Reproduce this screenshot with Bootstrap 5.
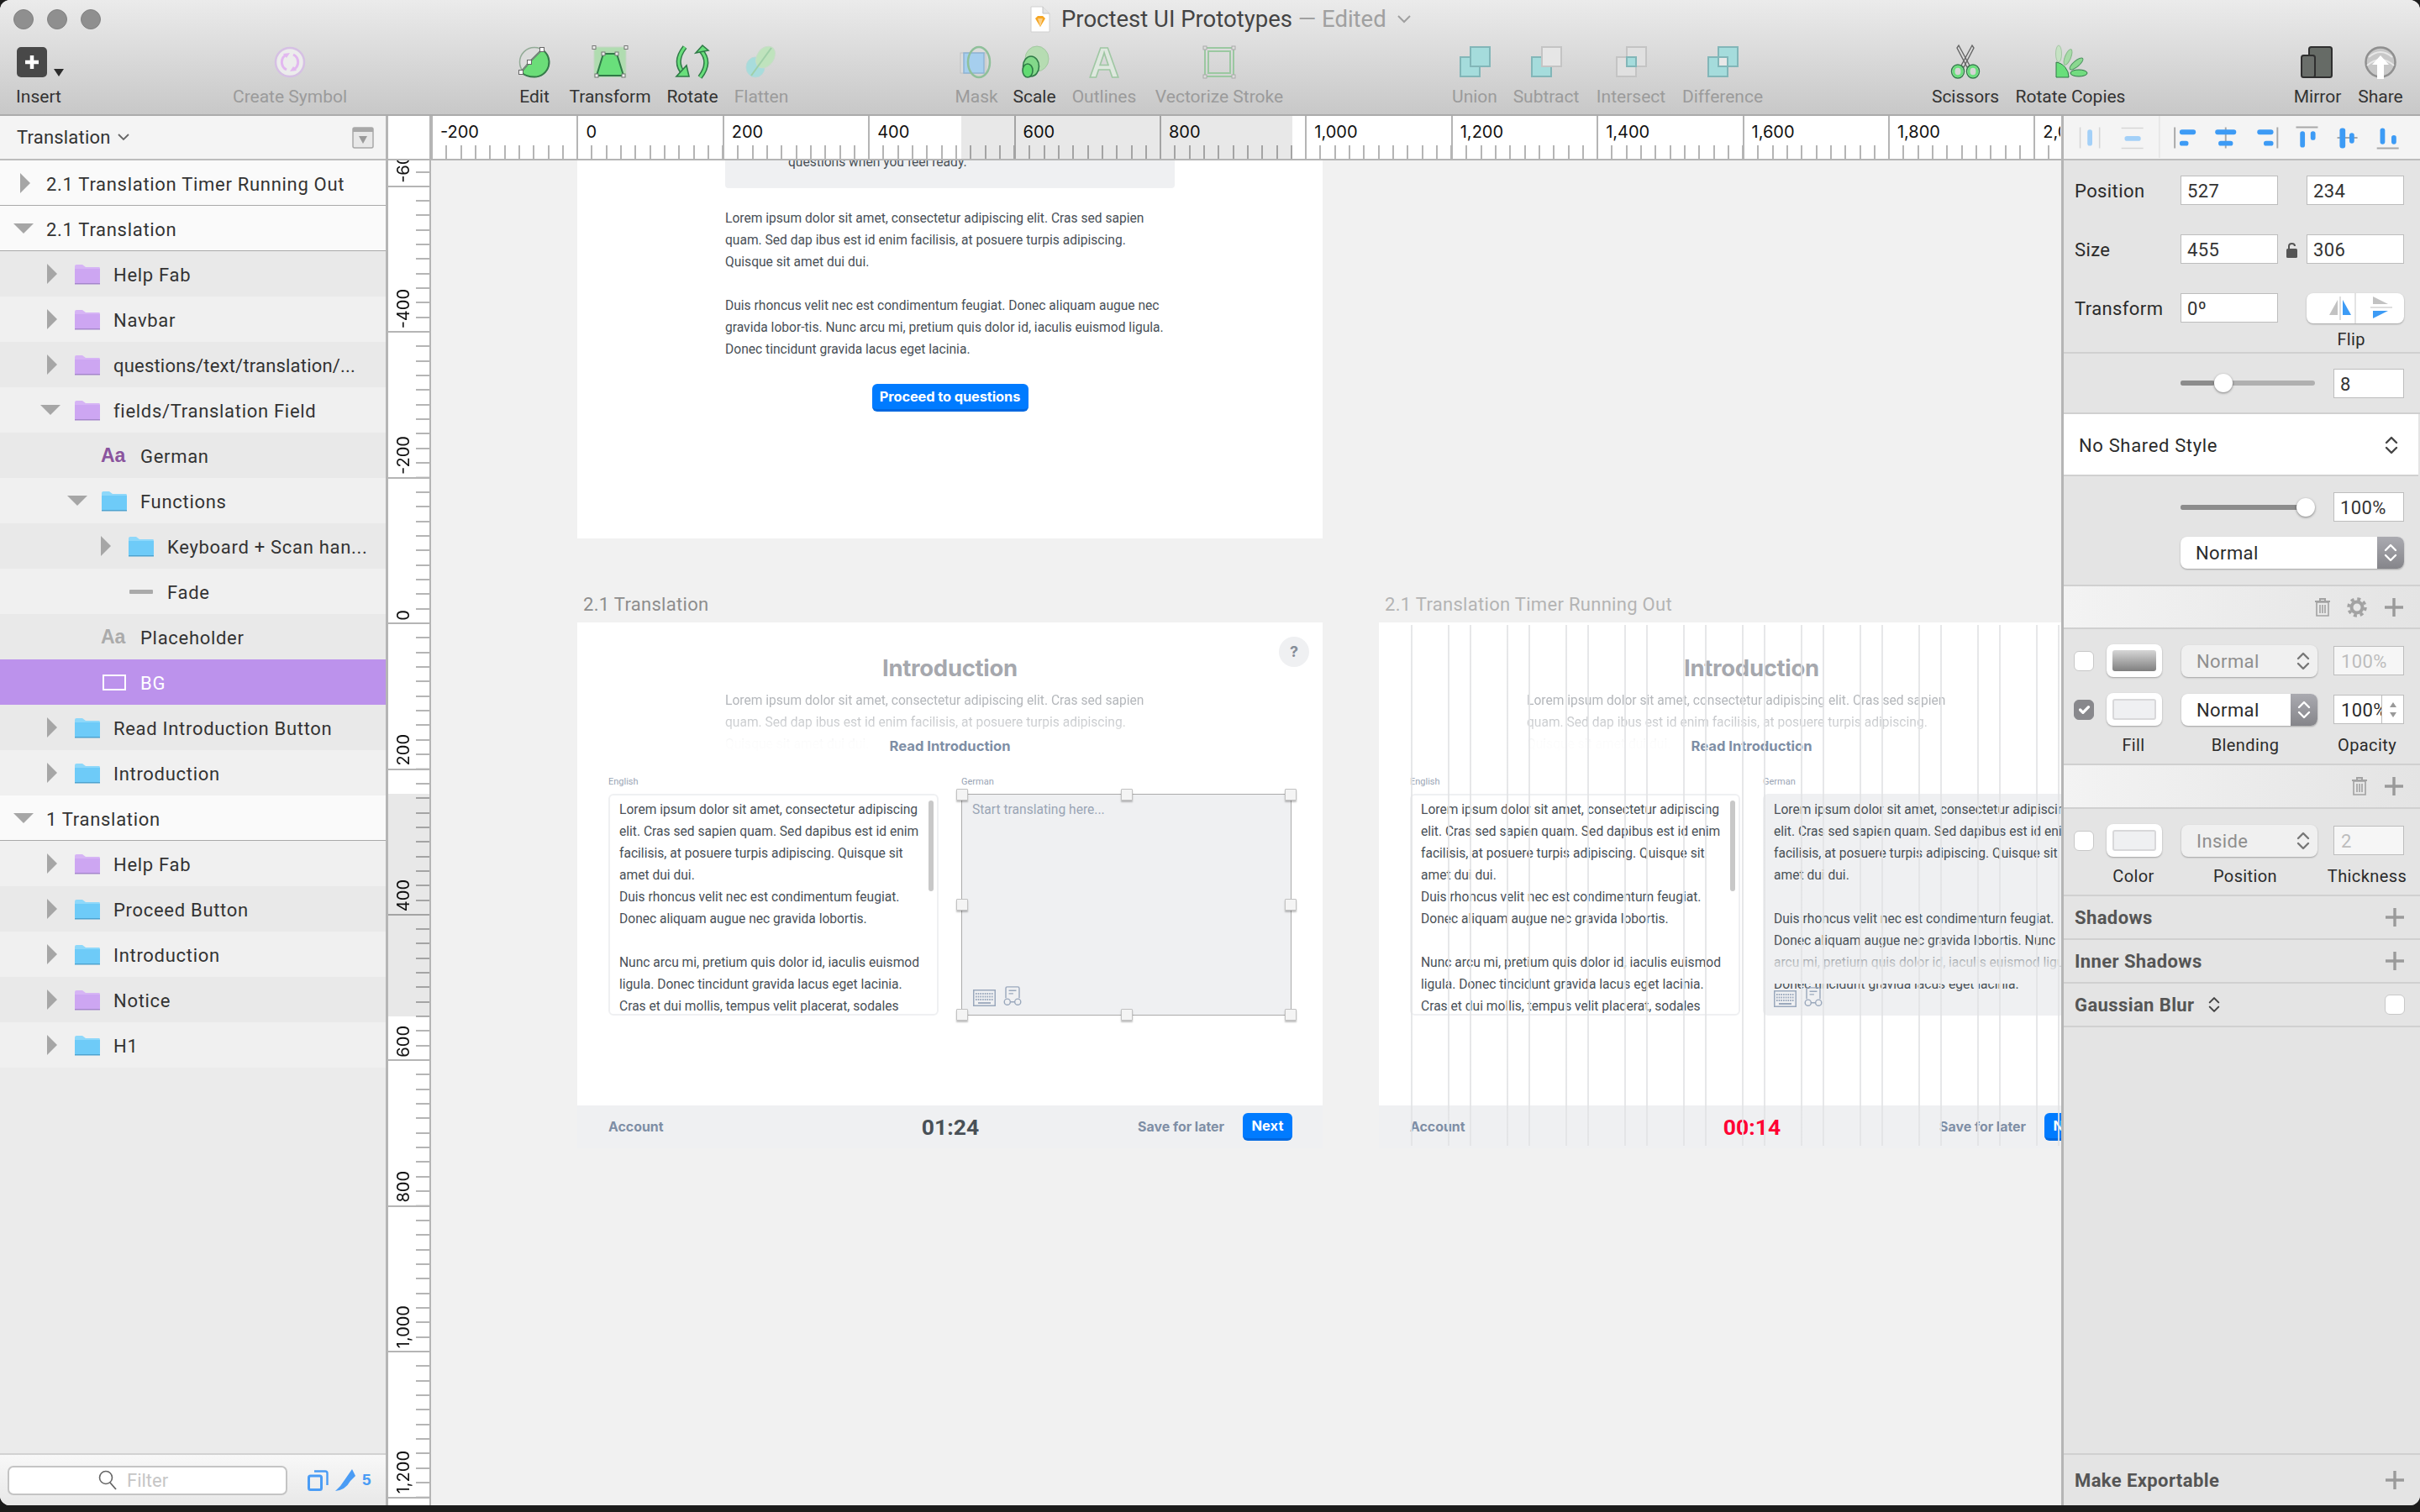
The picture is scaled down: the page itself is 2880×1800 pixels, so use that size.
<!DOCTYPE html>
<html lang="en">
<head>
<meta charset="UTF-8">
<title>Proctest UI Prototypes</title>
<link href="https://cdn.jsdelivr.net/npm/bootstrap@5.3.0/dist/css/bootstrap.min.css" rel="stylesheet">
<style>
html, body { margin: 0; height: 1800px; background: #1c1c1c; overflow: hidden; }
body { font-family: Roboto, "Liberation Sans", sans-serif; color: #333; }
.win { width: 2880px; height: 1792px; border-radius: 12px; overflow: hidden; background: #f1f1f1; }

/* toolbar */
.topbar { height: 138px; flex: none; background: linear-gradient(#ebebeb, #c8c8c8); border-bottom: 2px solid #ababab; }
.titlebar { height: 46px; padding-left: 16px; gap: 16px; }
.light { width: 24px; height: 24px; border-radius: 50%; background: #8f8f8f; border: 1px solid #808080; }
.doc-title { margin-left: 1090px; gap: 13px; font-size: 27.5px; color: #444; white-space: nowrap; }
.doc-title span { color: #a0a0a0; }
.tools { height: 90px; padding-top: 8px; padding-left: 10px; }
.tool { flex: none; font-size: 21px; line-height: 26px; color: #333; white-space: nowrap; }
.tool svg { height: 40px; width: 48px; margin-bottom: 8px; display: block; overflow: visible; }
.tool.off { color: #9b9b9b; }
.t-insert { width: 72px; }
.t-symbol { width: 160px; margin-left: 183px; }
.t-edit { width: 60px; margin-left: 181px; }
.t-transform { width: 110px; margin-left: 5px; }
.t-rotate { width: 70px; margin-left: 8px; }
.t-flatten { width: 80px; margin-left: 7px; }
.t-mask { width: 70px; margin-left: 181px; }
.t-scale { width: 60px; margin-left: 4px; }
.t-outlines { width: 90px; margin-left: 8px; }
.t-vector { width: 170px; margin-left: 7px; }
.t-union { width: 70px; margin-left: 184px; }
.t-subtract { width: 90px; margin-left: 5px; }
.t-intersect { width: 100px; margin-left: 6px; }
.t-difference { width: 100px; margin-left: 9px; }
.t-scissors { width: 100px; margin-left: 189px; }
.t-copies { width: 140px; margin-left: 5px; }
.t-mirror { width: 70px; margin-left: 189px; }
.t-share { width: 60px; margin-left: 10px; }

/* layers */
.layers { width: 459px; flex: none; background: #ebebeb; }
.page-head { height: 53px; flex: none; background: #f4f4f4; border-bottom: 2px solid #bcbcbc; padding: 0 14px 0 20px; font-size: 22px; letter-spacing: .2px; }
.tree-row { height: 54px; flex: none; font-size: 22px; letter-spacing: .7px; color: #333; white-space: nowrap; padding-top: 3px; }
.tree-row.even { background: #f0f0f0; }
.tree-row.odd { background: #e9e9e9; }
.tree-row.artboard { background: #fafafa; border-bottom: 1.5px solid #a9a9a9; }
.tree-row.chosen { background: #bc92ec; color: #fff; }
.tree-row .tight { letter-spacing: .2px; }
.lvl-0 { padding-left: 14px; }
.lvl-1 { padding-left: 46px; }
.lvl-2 { padding-left: 78px; }
.lvl-3 { padding-left: 110px; }
.arrow-slot { width: 32px; flex: none; display: flex; justify-content: center; margin-top: -3px; }
.tri-r { width: 0; height: 0; border-left: 12px solid #a6a6a6; border-top: 12px solid transparent; border-bottom: 12px solid transparent; }
.tri-d { width: 0; height: 0; border-top: 12px solid #a6a6a6; border-left: 12px solid transparent; border-right: 12px solid transparent; margin-left: -4px; }
.folder { width: 30px; height: 25px; margin: -3px 16px 0 11px; flex: none; }
.lead-in { margin-left: 9px; }
.aa { width: 30px; margin: -3px 17px 0 74px; flex: none; font: 700 23px/1 "Liberation Sans", sans-serif; letter-spacing: 0; color: #8a549e; }
.aa.dim { color: #ababab; }
.fade-ico { width: 28px; height: 5px; margin: -3px 17px 0 44px; background: #aaa; border-radius: 1px; flex: none; }
.rect-ico { width: 28px; height: 19px; margin: -3px 17px 0 76px; border: 2px solid #fff; flex: none; }
.layers-foot { height: 62px; flex: none; margin-top: auto; background: linear-gradient(#f8f8f8, #e8e8e8); border-top: 2px solid #d2d2d2; padding-left: 9px; }
.filter-box { width: 333px; height: 35px; background: #fff; border: 2px solid #c4c4c4; border-radius: 7px; gap: 12px; font-size: 22px; color: #c6c6c6; padding-left: 106px; }
.filter-count { font: 700 19px "Liberation Sans", sans-serif; color: #4a9cf5; }

/* rulers */
.ruler-row { height: 53px; flex: none; background: #fff; border-bottom: 2px solid #b5b5b5; }
.ruler-corner { width: 54px; flex: none; border-left: 3px solid #b5b5b5; border-right: 2px solid #b5b5b5; }
.h-ruler { width: 1939px; overflow: hidden; }
.h-cell { width: 173.4px; flex: none; border-left: 2px solid #b5b5b5; padding: 9px 0 0 9px; font: 20px/20px Inter, "Liberation Sans", sans-serif; color: #111; box-sizing: border-box;
  background: repeating-linear-gradient(to right, transparent 0 15.34px, #b5b5b5 15.34px 17.34px) left bottom / 100% 16px no-repeat; }
.v-ruler { width: 54px; flex: none; overflow: hidden; background: #fff; border-left: 3px solid #b5b5b5; border-right: 2px solid #b5b5b5; }
.v-cell { height: 173.4px; flex: none; border-bottom: 2px solid #b5b5b5; box-sizing: border-box; padding: 0 0 3px 8px; align-items: flex-end;
  background: repeating-linear-gradient(to top, transparent 0 15.34px, #b5b5b5 15.34px 17.34px) right bottom / 16px 100% no-repeat; }
.v-cell.stub { height: 32px; }
.v-cell span { writing-mode: vertical-rl; transform: rotate(180deg); font: 20px/20px Inter, "Liberation Sans", sans-serif; color: #111; white-space: nowrap; }
.ruler-sel-h { left: 631px; width: 394px; top: 0; bottom: 0; background: rgba(0,0,0,.09); }
.ruler-sel-v { left: 0; right: 0; top: 754px; height: 265px; background: rgba(0,0,0,.09); }

/* canvas */
.canvas { background: #f1f1f1; overflow: hidden; }
.board-name { position: absolute; font-size: 22px; line-height: 26px; letter-spacing: .3px; color: #8d8d8d; white-space: nowrap; }
.board-name.dim { color: #b4b4b4; }
.board { position: absolute; width: 887px; background: #fff; color: #495057; font-size: 15.6px; line-height: 26px; white-space: nowrap; }
.board-top { left: 174px; top: -100px; height: 550px; }
.notice-box { width: 535px; height: 133px; background: #eff0f2; margin: 0 auto; border-radius: 0 0 4px 4px; padding: 89px 0 0 75px; }
.copy-block { width: 535px; margin: 23px auto 0; }
.copy-block p { margin: 0 0 26px; }
.cta { display: block; margin: 28px auto 0; background: #007bff; color: #fff; border: 0; border-bottom: 3px solid #0068e0; border-radius: 6px; font: 700 16.4px/26px Inter, "Liberation Sans", sans-serif; letter-spacing: -.1px; }
.cta.wide { width: 186px; height: 33px; padding: 0; }
.board-low { top: 550px; height: 626px; }
.board-a { left: 174px; }
.board-b { left: 1128px; }
.help-fab { top: 17px; right: 16px; width: 36px; height: 36px; border-radius: 50%; background: #eff0f2; color: #868e99; font: 700 18px/36px Inter, sans-serif; text-align: center; }
.h-intro { margin: 36px 0 0; text-align: center; font: 700 27.5px/36px Inter, "Liberation Sans", sans-serif; letter-spacing: -.3px; color: #a6a8ae; }
.fade-copy { width: 535px; height: 78px; margin: 8px auto 0; color: #b4b7bb; -webkit-mask-image: linear-gradient(#000 25%, rgba(0,0,0,.55) 60%, rgba(0,0,0,.03) 80%); mask-image: linear-gradient(#000 25%, rgba(0,0,0,.55) 60%, rgba(0,0,0,.03) 80%); }
.read-link { margin-top: -22px; text-align: center; font: 700 16.6px/22px Inter, "Liberation Sans", sans-serif; color: #7e8ea5; position: relative; }
.pair { padding-left: 37px; gap: 27px; margin-top: 25px; }
.pane { width: 393px; flex: none; }
.pane-label { font-size: 11px; line-height: 14px; color: #9aa5b5; margin-bottom: 7px; }
.pane-text { height: 264px; border-radius: 6px; border: 2px solid #eff0f2; padding: 4px 0 0 11px; overflow: hidden; position: relative; }
.pane-scroll { right: 4px; top: 6px; width: 6px; height: 108px; background: #c8c8c8; border-radius: 3px; }
.pane-field { height: 264px; background: #eff0f2; border-radius: 6px; padding: 6px 0 0 13px; position: relative; }
.pane-field.picked { border: 1.5px solid #ababab; border-radius: 0; padding: 5px 0 0 12px; }
.pane-field .hint { color: #9aa5b5; }
.pane-fade { left: 0; right: 0; bottom: 38px; height: 50px; background: linear-gradient(rgba(239,240,242,0), #eff0f2 75%); }
.pane-tools { left: 13px; bottom: 10px; gap: 9px; }
.grip { width: 14px; height: 14px; background: #f4f4f4; border: 1px solid #c2c2c2; border-radius: 1px; box-shadow: 0 2px 2px rgba(0,0,0,.25); }
.board-foot { height: 51px; margin-top: auto; background: #eff0f2; padding: 0 36px 0 37px; font: 700 15.9px Inter, "Liberation Sans", sans-serif; color: #7e8ea5; }
.foot-side { flex: 1 1 0; }
.clock { font: 700 26.5px Roboto, sans-serif; color: #495057; }
.clock.hot { color: #ff0033; }
.next-btn { width: 59px; height: 33px; background: #007bff; color: #fff; border: 0; border-bottom: 3px solid #0068e0; border-radius: 6px; padding: 0; font: 700 16.5px Inter, sans-serif; margin-left: 22px; }
.grid-lines { top: 3px; left: 38px; width: 849px; bottom: 3px; pointer-events: none;
  background: repeating-linear-gradient(to right, rgba(226,227,229,.85) 0 2px, transparent 2px 44px, rgba(226,227,229,.85) 44px 46px, transparent 46px 70px); }

/* inspector */
.inspector { width: 427px; flex: none; background: #e4e4e4; border-left: 3px solid #b5b5b5; font-size: 22px; letter-spacing: .4px; color: #2b2b2b; }
.align-strip { height: 53px; flex: none; background: #f4f4f4; border-bottom: 2px solid #bcbcbc; display: block; width: 424px; }
.sec { flex: none; border-bottom: 2px solid #d0d0d0; }
.sec-geom { height: 230px; padding: 18px 19px 0 13px; }
.geom-row { height: 35px; margin-bottom: 35px; }
.geom-row span.cap { width: 126px; flex: none; padding-top: 2px; }
.insp-input.form-control { width: 116px; height: 35px; padding: 2px 7px 0; border: 1.5px solid #bdbdbd; border-radius: 0; background: #fff; font-size: 22px; line-height: 30px; letter-spacing: .4px; color: #333; flex: none; }
.insp-input.form-control.short { width: 84px; }
.geom-gap { width: 34px; flex: none; }
.flip-seg { width: 116px; height: 36px; background: #fff; border-radius: 8px; box-shadow: 0 1px 2px rgba(0,0,0,.3); }
.flip-cap { font-size: 20px; text-align: right; padding-right: 46px; margin-top: -28px; line-height: 26px; }
.sec-slide { height: 72px; padding-left: 139px; padding-right: 19px; }
.track { width: 160px; height: 6px; border-radius: 3px; background: #b0b0b0; position: relative; flex: none; margin-right: 22px; }
.track .fill { height: 6px; background: #8c8c8c; border-radius: 3px; }
.track .knob { top: 50%; width: 22px; height: 22px; border-radius: 50%; background: #fff; box-shadow: 0 1px 3px rgba(0,0,0,.45); transform: translate(-50%, -50%); }
.sec-shared { height: 74px; background: #fff; padding: 2px 24px 0 18px; margin-right: 2px; letter-spacing: .65px; }
.sec-blend { height: 131px; padding: 19px 19px 0 139px; }
.blend-top { margin-bottom: 18px; }
.blend-sel { height: 38px; background: #fff; border-radius: 8px; box-shadow: 0 1px 2px rgba(0,0,0,.3); padding-left: 18px; padding-top: 1px; overflow: hidden; }
.blend-sel.mute { background: #f0f0f0; color: #8e8e8e; }
.stepper { width: 32px; align-self: stretch; margin-top: -1px; background: linear-gradient(#aaaab0, #85858a); display: flex; align-items: center; justify-content: center; flex: none; margin-left: auto; }
.stepper.plain { background: none; margin-right: 1px; }
.sec-head { height: 51px; padding-right: 19px; gap: 20px; background: linear-gradient(to right, #f3f3f3, #e4e4e4); }
.sec-head.tall { height: 52px; }
.sec-fills { height: 162px; padding: 18px 19px 0 12px; }
.fill-row { height: 39px; margin-bottom: 19px; }
.insp-check.form-check-input { width: 24px; height: 24px; margin: 0 15px 0 0; border: 1px solid #c8c8c8; border-radius: 6px; flex: none; }
.insp-check.form-check-input:checked { background-color: #88888c; border-color: #88888c; }
.swatch { width: 66px; height: 39px; background: #fff; border-radius: 8px; box-shadow: 0 1px 2px rgba(0,0,0,.3); padding: 7px; flex: none; margin-right: 23px; }
.swatch i { display: block; height: 100%; border: 2px solid #d8d8da; border-radius: 3px; background: #eff0f2; }
.swatch i.grad { background: linear-gradient(#d6d6d6, #7f7f7f); border: 0; }
.blend-sel.narrow { width: 162px; flex: none; margin-right: 19px; }
.op-box { width: 84px; height: 35px; border: 1.5px solid #bdbdbd; background: #fff; padding: 1px 0 0 8px; overflow: hidden; position: relative; flex: none; }
.op-box.mute { color: #bdbdbd; background: #f6f6f6; }
.op-step { right: 0; top: 0; bottom: 0; width: 26px; background: #fff; border-left: 1.5px solid #bdbdbd; }
.cap-row { font-size: 20px; position: relative; height: 26px; margin-top: -11px; }
.cap-row span { position: absolute; transform: translateX(-50%); white-space: nowrap; }
.cap-a { left: 71px; }
.cap-b { left: 204px; }
.cap-c { left: 349px; }
.sec-stroke { height: 104px; padding: 18px 19px 0 12px; }
.sec-title { height: 52px; padding: 0 18px 0 13px; font-weight: 700; color: #555; }
.make-export { height: 62px; flex: none; margin-top: auto; padding: 0 18px 0 13px; border-top: 2px solid #d0d0d0; font-weight: 700; color: #555; }
.lock-ico { width: 34px; flex: none; padding-left: 10px; }
</style>
</head>
<body>
<svg width="0" height="0" class="position-absolute">
  <defs>
    <symbol id="folder-p" viewBox="0 0 30 25"><path d="M0 3 Q0 1 2 1 H9 L13 4 H29 Q30 4 30 6 V22 Q30 24 28 24 H2 Q0 24 0 22Z" fill="#d6b4f5"/><path d="M0 6 H30 V22 Q30 24 28 24 H2 Q0 24 0 22Z" fill="#cda6f2"/><rect y="23" width="30" height="1.5" fill="#a586cc"/></symbol>
    <symbol id="folder-b" viewBox="0 0 30 25"><path d="M0 3 Q0 1 2 1 H9 L13 4 H29 Q30 4 30 6 V22 Q30 24 28 24 H2 Q0 24 0 22Z" fill="#8ed8fa"/><path d="M0 6 H30 V22 Q30 24 28 24 H2 Q0 24 0 22Z" fill="#6ecbf8"/><rect y="23" width="30" height="1.5" fill="#4ea3d0"/></symbol>
    <symbol id="updown" viewBox="0 0 16 24"><path d="M2 9 L8 3 L14 9 M2 15 L8 21 L14 15" fill="none" stroke="currentColor" stroke-width="2.4" stroke-linecap="round" stroke-linejoin="round"/></symbol>
    <symbol id="plus" viewBox="0 0 24 24"><path d="M12 1 V23 M1 12 H23" stroke="#9a9a9a" stroke-width="3.4"/></symbol>
    <symbol id="trash" viewBox="0 0 18 22"><path d="M0 4 H18 M6 4 V1 H12 V4" fill="none" stroke="#a2a2a2" stroke-width="2"/><path d="M2 5 H16 V21 H2Z M6 8 V18 M9 8 V18 M12 8 V18" fill="none" stroke="#a2a2a2" stroke-width="1.6"/></symbol>
    <symbol id="keys" viewBox="0 0 27 20"><rect x=".75" y=".75" width="25.5" height="18.5" fill="none" stroke="#9aa8bc" stroke-width="1.5"/><path d="M3 5 H24 M3 8.5 H24 M3 12 H24" stroke="#9aa8bc" stroke-width="2" stroke-dasharray="1.6 1.1"/><path d="M6 16 H21" stroke="#9aa8bc" stroke-width="1.8"/></symbol>
    <symbol id="scan" viewBox="0 0 24 27"><path d="M3 16 V3 Q3 1 5 1 H19 Q21 1 21 3 V16 M7 6 H17 M7 10 H13 M9 21 H15" fill="none" stroke="#9aa8bc" stroke-width="1.6"/><circle cx="5" cy="21" r="4" fill="none" stroke="#9aa8bc" stroke-width="1.6"/><circle cx="19" cy="21" r="4" fill="none" stroke="#9aa8bc" stroke-width="1.6"/></symbol>
  </defs>
</svg>

<div class="win d-flex flex-column">
  <div class="topbar">
    <div class="titlebar d-flex align-items-center">
      <div class="light"></div><div class="light"></div><div class="light"></div>
      <div class="doc-title d-flex align-items-center">
        <svg width="24" height="32" viewBox="0 0 24 32"><path d="M1 1 H15 L23 9 V31 H1Z" fill="#fff" stroke="#d0d0d0"/><path d="M15 1 V9 H23" fill="#e4e4e4" stroke="#c4c4c4"/><path d="M6 15 L9 12 H15 L18 15 L12 25Z" fill="#f5a623"/><path d="M9 15 H15 L12 25Z" fill="#fbd08a"/></svg>
        <div>Proctest UI Prototypes <span>— Edited</span></div>
        <svg width="16" height="10" viewBox="0 0 16 10"><path d="M1 1 L8 8 L15 1" fill="none" stroke="#a0a0a0" stroke-width="2"/></svg>
      </div>
    </div>
    <div class="tools d-flex">
      <div class="tool t-insert text-center"><svg viewBox="0 0 72 40" class="w-100"><rect x="10" y="2" width="36" height="36" rx="5" fill="#484848"/><path d="M28 12 V28 M20 20 H36" stroke="#fff" stroke-width="4.5"/><path d="M54 28 H66 L60 37Z" fill="#2c2c2c"/></svg>Insert</div>
      <div class="tool off t-symbol d-flex flex-column align-items-center"><svg viewBox="0 0 48 40"><circle cx="24" cy="20" r="17" fill="#ececec" stroke="#d6c0e4" stroke-width="2.5"/><path d="M20 11 A10 10 0 0 0 20 29 M28 11 A10 10 0 0 1 28 29" fill="none" stroke="#e2b8f0" stroke-width="3"/><path d="M16 10 L24 9 L20 15Z M32 30 L24 31 L28 25Z" fill="#e2b8f0"/></svg>Create Symbol</div>
      <div class="tool t-edit d-flex flex-column align-items-center"><svg viewBox="0 0 48 40"><circle cx="24" cy="20" r="17.5" fill="#dcdcdc" stroke="#93ab97" stroke-width="1.5"/><path d="M8 32 L18 20 L33 5 A17.5 17.5 0 0 1 24 37.5 Q14 37.5 8 32Z" fill="#6bdd78" stroke="#357a49" stroke-width="2"/><path d="M8 32 L18 20 L33 5" fill="none" stroke="#888" stroke-width="1.5"/><rect x="5.5" y="29.5" width="5" height="5" fill="#fff" stroke="#666"/><rect x="15.5" y="17.5" width="5" height="5" fill="#fff" stroke="#666"/><rect x="30.5" y="2.5" width="5" height="5" fill="#fff" stroke="#666"/></svg>Edit</div>
      <div class="tool t-transform d-flex flex-column align-items-center"><svg viewBox="0 0 48 40"><rect x="5" y="2" width="38" height="36" fill="#b0dcb0" stroke="#c6d6c6"/><path d="M16 10 H32 L40 36 H8Z" fill="#69df7b" stroke="#2f7a47" stroke-width="2"/><g fill="#eee" stroke="#777"><rect x="3" y="0.5" width="4" height="4"/><rect x="41" y="0.5" width="4" height="4"/><rect x="14" y="8" width="4" height="4"/><rect x="30" y="8" width="4" height="4"/><rect x="6" y="34" width="4" height="4"/><rect x="38" y="34" width="4" height="4"/></g></svg>Transform</div>
      <div class="tool t-rotate d-flex flex-column align-items-center"><svg viewBox="0 0 48 40"><path d="M15 2 Q1 20 14 34" fill="none" stroke="#2f7a47" stroke-width="6"/><path d="M15 2 Q1 20 14 34" fill="none" stroke="#69df7b" stroke-width="3"/><path d="M33 38 Q47 20 34 6" fill="none" stroke="#2f7a47" stroke-width="6"/><path d="M33 38 Q47 20 34 6" fill="none" stroke="#69df7b" stroke-width="3"/><path d="M5 37 L20 37 L17 24Z M43 6 L28 9 L36 0Z" fill="#69df7b" stroke="#2f7a47" stroke-width="1.6"/></svg>Rotate</div>
      <div class="tool off t-flatten d-flex flex-column align-items-center"><svg viewBox="0 0 48 40"><ellipse cx="17" cy="26" rx="11" ry="12" fill="#a8dcdc" stroke="#b8d8d8"/><ellipse cx="29" cy="14" rx="10" ry="14" transform="rotate(35 29 14)" fill="#bfe3bd" stroke="#c8dcc8"/><path d="M12 36 L36 3" stroke="#9fcfa8" stroke-width="2"/></svg>Flatten</div>
      <div class="tool off t-mask d-flex flex-column align-items-center"><svg viewBox="0 0 48 40"><rect x="5" y="9" width="30" height="24" fill="#ddd" stroke="#c2c2c2"/><rect x="9" y="9" width="24" height="24" fill="#a6cfee" stroke="#8fb4d4" stroke-width="1.5"/><ellipse cx="27" cy="20" rx="13" ry="18" fill="none" stroke="#8fc09a" stroke-width="2.5"/></svg>Mask</div>
      <div class="tool t-scale d-flex flex-column align-items-center"><svg viewBox="0 0 48 40"><ellipse cx="27" cy="16" rx="14" ry="15" fill="#b6dcb2" stroke="#a2c8a0"/><ellipse cx="20" cy="25" rx="9.5" ry="12" fill="#83d88a" stroke="#2f7a47" stroke-width="1.6"/><ellipse cx="16" cy="30" rx="6" ry="8" fill="#62db72" stroke="#2f7a47" stroke-width="1.6"/></svg>Scale</div>
      <div class="tool off t-outlines d-flex flex-column align-items-center"><svg viewBox="0 0 48 40"><text x="24" y="38" text-anchor="middle" font-family="Liberation Sans, sans-serif" font-size="50" font-weight="700" fill="#dfe8df" stroke="#9fc7a3" stroke-width="1.6">A</text></svg>Outlines</div>
      <div class="tool off t-vector d-flex flex-column align-items-center"><svg viewBox="0 0 48 40"><rect x="7" y="3" width="34" height="34" fill="none" stroke="#9bc8a1" stroke-width="2"/><rect x="11" y="7" width="26" height="26" fill="none" stroke="#9bc8a1" stroke-width="2"/><g fill="#ddd" stroke="#aaa"><rect x="5" y="1" width="4" height="4"/><rect x="39" y="1" width="4" height="4"/><rect x="5" y="35" width="4" height="4"/><rect x="39" y="35" width="4" height="4"/></g></svg>Vectorize Stroke</div>
      <div class="tool off t-union d-flex flex-column align-items-center"><svg viewBox="0 0 48 40"><rect x="7" y="14" width="23" height="23" fill="#a5dcdc" stroke="#82b6b8" stroke-width="2"/><rect x="19" y="2" width="23" height="23" fill="#a5dcdc" stroke="#82b6b8" stroke-width="2"/></svg>Union</div>
      <div class="tool off t-subtract d-flex flex-column align-items-center"><svg viewBox="0 0 48 40"><rect x="7" y="14" width="23" height="23" fill="#a5dcdc" stroke="#82b6b8" stroke-width="2"/><rect x="19" y="2" width="23" height="23" fill="#e6e6e6" stroke="#c4c4c4" stroke-width="2"/></svg>Subtract</div>
      <div class="tool off t-intersect d-flex flex-column align-items-center"><svg viewBox="0 0 48 40"><rect x="7" y="14" width="23" height="23" fill="#e0e0e0" stroke="#c4c4c4" stroke-width="2"/><rect x="19" y="2" width="23" height="23" fill="#e0e0e0" stroke="#c4c4c4" stroke-width="2"/><rect x="19" y="14" width="11" height="11" fill="#a5dcdc" stroke="#82b6b8" stroke-width="2"/></svg>Intersect</div>
      <div class="tool off t-difference d-flex flex-column align-items-center"><svg viewBox="0 0 48 40"><rect x="7" y="14" width="23" height="23" fill="#a5dcdc" stroke="#82b6b8" stroke-width="2"/><rect x="19" y="2" width="23" height="23" fill="#a5dcdc" stroke="#82b6b8" stroke-width="2"/><rect x="19" y="14" width="11" height="11" fill="#e8e8e8" stroke="#82b6b8" stroke-width="2"/></svg>Difference</div>
      <div class="tool t-scissors d-flex flex-column align-items-center"><svg viewBox="0 0 48 40"><path d="M16 0 L29 24 L26 26 L14 3Z M32 0 L19 24 L22 26 L34 3Z" fill="#ddd" stroke="#666" stroke-width="1.4"/><ellipse cx="15" cy="31" rx="7.5" ry="8" fill="none" stroke="#2f7a47" stroke-width="1.4"/><ellipse cx="15" cy="31" rx="5" ry="5.8" fill="none" stroke="#69df7b" stroke-width="3"/><ellipse cx="33" cy="31" rx="7.5" ry="8" fill="none" stroke="#2f7a47" stroke-width="1.4"/><ellipse cx="33" cy="31" rx="5" ry="5.8" fill="none" stroke="#69df7b" stroke-width="3"/></svg>Scissors</div>
      <div class="tool t-copies d-flex flex-column align-items-center"><svg viewBox="0 0 48 40"><ellipse cx="10" cy="10" rx="3.5" ry="10" fill="#c6e2c4" stroke="#a6c6a6"/><ellipse cx="21" cy="14" rx="3.5" ry="10" transform="rotate(22 21 14)" fill="#a8dca8" stroke="#86b88a"/><ellipse cx="31" cy="22" rx="3.5" ry="10" transform="rotate(50 31 22)" fill="#8ad890" stroke="#4f9562"/><ellipse cx="34" cy="33" rx="10" ry="4" fill="#72dc80" stroke="#2f7a47"/><path d="M7 38 V20 A18 18 0 0 1 22 38Z" fill="#69df7b" stroke="#2f7a47" stroke-width="1"/></svg>Rotate Copies</div>
      <div class="tool t-mirror d-flex flex-column align-items-center"><svg viewBox="0 0 48 40"><rect x="14" y="2" width="27" height="36" rx="2.5" fill="#666b66" stroke="#2f2f2f" stroke-width="2"/><rect x="5" y="12" width="16" height="26" rx="2.5" fill="#6a6e6a" stroke="#2f2f2f" stroke-width="2"/></svg>Mirror</div>
      <div class="tool t-share d-flex flex-column align-items-center"><svg viewBox="0 0 48 40"><circle cx="24" cy="20" r="17.5" fill="#c8c8c8" stroke="#8f8f8f" stroke-width="2.5"/><path d="M10 14 Q24 2 38 14 M8 24 Q24 10 40 24" fill="none" stroke="#e8e8e8" stroke-width="2"/><path d="M24 12 L34 23 H28 V40 H20 V23 H14Z" fill="#fff"/></svg>Share</div>
    </div>
  </div>

  <div class="d-flex flex-grow-1 overflow-hidden">
    <div class="layers d-flex flex-column">
      <div class="page-head d-flex align-items-center">
        Translation
        <svg class="ms-2" width="14" height="9" viewBox="0 0 14 9"><path d="M1 1 L7 7 L13 1" fill="none" stroke="#666" stroke-width="1.8"/></svg>
        <svg class="ms-auto" width="26" height="26" viewBox="0 0 26 26"><rect x="1" y="1" width="24" height="24" rx="2" fill="#e8e8e8" stroke="#a8a8a8" stroke-width="1.5"/><rect x="1" y="1" width="24" height="5" fill="#a8a8a8"/><path d="M8 11 H18 L13 20Z" fill="#9a9a9a"/></svg>
      </div>
      <div class="tree-row artboard lvl-0 d-flex align-items-center"><div class="arrow-slot"><div class="tri-r"></div></div><span class="lead-in">2.1 Translation Timer Running Out</span></div>
      <div class="tree-row artboard lvl-0 d-flex align-items-center"><div class="arrow-slot"><div class="tri-d"></div></div><span class="lead-in">2.1 Translation</span></div>
      <div class="tree-row odd lvl-1 d-flex align-items-center"><div class="arrow-slot"><div class="tri-r"></div></div><svg class="folder"><use href="#folder-p"/></svg>Help Fab</div>
      <div class="tree-row even lvl-1 d-flex align-items-center"><div class="arrow-slot"><div class="tri-r"></div></div><svg class="folder"><use href="#folder-p"/></svg>Navbar</div>
      <div class="tree-row odd lvl-1 d-flex align-items-center"><div class="arrow-slot"><div class="tri-r"></div></div><svg class="folder"><use href="#folder-p"/></svg><span class="tight">questions/text/translation/...</span></div>
      <div class="tree-row even lvl-1 d-flex align-items-center"><div class="arrow-slot"><div class="tri-d"></div></div><svg class="folder"><use href="#folder-p"/></svg>fields/Translation Field</div>
      <div class="tree-row odd lvl-1 d-flex align-items-center"><span class="aa">Aa</span>German</div>
      <div class="tree-row even lvl-2 d-flex align-items-center"><div class="arrow-slot"><div class="tri-d"></div></div><svg class="folder"><use href="#folder-b"/></svg>Functions</div>
      <div class="tree-row odd lvl-3 d-flex align-items-center"><div class="arrow-slot"><div class="tri-r"></div></div><svg class="folder"><use href="#folder-b"/></svg>Keyboard + Scan han...</div>
      <div class="tree-row even lvl-3 d-flex align-items-center"><div class="fade-ico"></div>Fade</div>
      <div class="tree-row odd lvl-1 d-flex align-items-center"><span class="aa dim">Aa</span>Placeholder</div>
      <div class="tree-row chosen lvl-1 d-flex align-items-center"><div class="rect-ico"></div>BG</div>
      <div class="tree-row odd lvl-1 d-flex align-items-center"><div class="arrow-slot"><div class="tri-r"></div></div><svg class="folder"><use href="#folder-b"/></svg>Read Introduction Button</div>
      <div class="tree-row even lvl-1 d-flex align-items-center"><div class="arrow-slot"><div class="tri-r"></div></div><svg class="folder"><use href="#folder-b"/></svg>Introduction</div>
      <div class="tree-row artboard lvl-0 d-flex align-items-center"><div class="arrow-slot"><div class="tri-d"></div></div><span class="lead-in">1 Translation</span></div>
      <div class="tree-row even lvl-1 d-flex align-items-center"><div class="arrow-slot"><div class="tri-r"></div></div><svg class="folder"><use href="#folder-p"/></svg>Help Fab</div>
      <div class="tree-row odd lvl-1 d-flex align-items-center"><div class="arrow-slot"><div class="tri-r"></div></div><svg class="folder"><use href="#folder-b"/></svg>Proceed Button</div>
      <div class="tree-row even lvl-1 d-flex align-items-center"><div class="arrow-slot"><div class="tri-r"></div></div><svg class="folder"><use href="#folder-b"/></svg>Introduction</div>
      <div class="tree-row odd lvl-1 d-flex align-items-center"><div class="arrow-slot"><div class="tri-r"></div></div><svg class="folder"><use href="#folder-p"/></svg>Notice</div>
      <div class="tree-row even lvl-1 d-flex align-items-center"><div class="arrow-slot"><div class="tri-r"></div></div><svg class="folder"><use href="#folder-b"/></svg>H1</div>
      <div class="layers-foot d-flex align-items-center">
        <div class="filter-box d-flex align-items-center">
          <svg width="22" height="24" viewBox="0 0 22 24"><circle cx="9" cy="9" r="7.5" fill="none" stroke="#666" stroke-width="1.6"/><path d="M14 15 L21 23" stroke="#666" stroke-width="1.8"/></svg>Filter
        </div>
        <svg class="ms-4" width="25" height="25" viewBox="0 0 25 25"><rect x="1.5" y="7" width="15" height="16.5" rx="2" fill="none" stroke="#4a9cf5" stroke-width="3"/><path d="M8 1.5 H21 Q23.5 1.5 23.5 4 V18" fill="none" stroke="#4a9cf5" stroke-width="2.4"/></svg>
        <svg class="ms-2" width="24" height="26" viewBox="0 0 24 26"><path d="M0 26 Q12 25 18 14 L24 8 L20 0 L11 13 Q7 20 0 26Z" fill="#4a9cf5"/></svg>
        <span class="filter-count ms-2">5</span>
      </div>
    </div>

    <div class="flex-grow-1 d-flex flex-column overflow-hidden">
      <div class="ruler-row d-flex">
        <div class="ruler-corner"></div>
        <div class="h-ruler d-flex position-relative">
          <div class="h-cell">-200</div><div class="h-cell">0</div><div class="h-cell">200</div><div class="h-cell">400</div><div class="h-cell">600</div><div class="h-cell">800</div><div class="h-cell">1,000</div><div class="h-cell">1,200</div><div class="h-cell">1,400</div><div class="h-cell">1,600</div><div class="h-cell">1,800</div><div class="h-cell">2,000</div>
          <div class="ruler-sel-h position-absolute"></div>
        </div>
      </div>
      <div class="d-flex flex-grow-1 overflow-hidden">
        <div class="v-ruler d-flex flex-column position-relative">
          <div class="v-cell stub d-flex"><span>-600</span></div>
          <div class="v-cell d-flex"><span>-400</span></div>
          <div class="v-cell d-flex"><span>-200</span></div>
          <div class="v-cell d-flex"><span>0</span></div>
          <div class="v-cell d-flex"><span>200</span></div>
          <div class="v-cell d-flex"><span>400</span></div>
          <div class="v-cell d-flex"><span>600</span></div>
          <div class="v-cell d-flex"><span>800</span></div>
          <div class="v-cell d-flex"><span>1,000</span></div>
          <div class="v-cell d-flex"><span>1,200</span></div>
          <div class="v-cell d-flex"></div>
          <div class="ruler-sel-v position-absolute"></div>
        </div>
        <div class="canvas flex-grow-1 position-relative">
          <div class="board board-top">
            <div class="notice-box">questions when you feel ready.</div>
            <div class="copy-block">
              <p>Lorem ipsum dolor sit amet, consectetur adipiscing elit. Cras sed sapien<br>quam. Sed dap ibus est id enim facilisis, at posuere turpis adipiscing.<br>Quisque sit amet dui dui.</p>
              <p class="mb-0">Duis rhoncus velit nec est condimentum feugiat. Donec aliquam augue nec<br>gravida lobor-tis. Nunc arcu mi, pretium quis dolor id, iaculis euismod ligula.<br>Donec tincidunt gravida lacus eget lacinia.</p>
            </div>
            <button class="cta wide">Proceed to questions</button>
          </div>

          <div class="board-name" style="left:181px;top:516px">2.1 Translation</div>
          <div class="board board-low board-a d-flex flex-column">
            <div class="help-fab position-absolute">?</div>
            <div class="h-intro">Introduction</div>
            <div class="fade-copy">Lorem ipsum dolor sit amet, consectetur adipiscing elit. Cras sed sapien<br>quam. Sed dap ibus est id enim facilisis, at posuere turpis adipiscing.<br>Quisque sit amet dui dui.</div>
            <div class="read-link">Read Introduction</div>
            <div class="pair d-flex">
              <div class="pane">
                <div class="pane-label">English</div>
                <div class="pane-text">Lorem ipsum dolor sit amet, consectetur adipiscing<br>elit. Cras sed sapien quam. Sed dapibus est id enim<br>facilisis, at posuere turpis adipiscing. Quisque sit<br>amet dui dui.<br>Duis rhoncus velit nec est condimentum feugiat.<br>Donec aliquam augue nec gravida lobortis.<br><br>Nunc arcu mi, pretium quis dolor id, iaculis euismod<br>ligula. Donec tincidunt gravida lacus eget lacinia.<br>Cras et dui mollis, tempus velit placerat, sodales<div class="pane-scroll position-absolute"></div></div>
              </div>
              <div class="pane">
                <div class="pane-label">German</div>
                <div class="pane-field picked">
                  <span class="hint">Start translating here...</span>
                  <div class="pane-tools position-absolute d-flex align-items-end"><svg width="27" height="20"><use href="#keys"/></svg><svg width="22" height="24"><use href="#scan"/></svg></div>
                  <div class="grip position-absolute top-0 start-0 translate-middle"></div>
                  <div class="grip position-absolute top-0 start-50 translate-middle"></div>
                  <div class="grip position-absolute top-0 start-100 translate-middle"></div>
                  <div class="grip position-absolute top-50 start-0 translate-middle"></div>
                  <div class="grip position-absolute top-50 start-100 translate-middle"></div>
                  <div class="grip position-absolute top-100 start-0 translate-middle"></div>
                  <div class="grip position-absolute top-100 start-50 translate-middle"></div>
                  <div class="grip position-absolute top-100 start-100 translate-middle"></div>
                </div>
              </div>
            </div>
            <div class="board-foot d-flex align-items-center">
              <div class="foot-side">Account</div>
              <div class="clock">01:24</div>
              <div class="foot-side d-flex align-items-center justify-content-end">Save for later<button class="next-btn">Next</button></div>
            </div>
          </div>

          <div class="board-name dim" style="left:1135px;top:516px">2.1 Translation Timer Running Out</div>
          <div class="board board-low board-b d-flex flex-column">
            <div class="h-intro">Introduction</div>
            <div class="fade-copy">Lorem ipsum dolor sit amet, consectetur adipiscing elit. Cras sed sapien<br>quam. Sed dap ibus est id enim facilisis, at posuere turpis adipiscing.<br>Quisque sit amet dui dui.</div>
            <div class="read-link">Read Introduction</div>
            <div class="pair d-flex">
              <div class="pane">
                <div class="pane-label">English</div>
                <div class="pane-text">Lorem ipsum dolor sit amet, consectetur adipiscing<br>elit. Cras sed sapien quam. Sed dapibus est id enim<br>facilisis, at posuere turpis adipiscing. Quisque sit<br>amet dui dui.<br>Duis rhoncus velit nec est condimentum feugiat.<br>Donec aliquam augue nec gravida lobortis.<br><br>Nunc arcu mi, pretium quis dolor id, iaculis euismod<br>ligula. Donec tincidunt gravida lacus eget lacinia.<br>Cras et dui mollis, tempus velit placerat, sodales<div class="pane-scroll position-absolute"></div></div>
              </div>
              <div class="pane">
                <div class="pane-label">German</div>
                <div class="pane-field overflow-hidden">Lorem ipsum dolor sit amet, consectetur adipiscing<br>elit. Cras sed sapien quam. Sed dapibus est id enim<br>facilisis, at posuere turpis adipiscing. Quisque sit<br>amet dui dui.<br><br>Duis rhoncus velit nec est condimentum feugiat.<br>Donec aliquam augue nec gravida lobortis. Nunc<br>arcu mi, pretium quis dolor id, iaculis euismod ligula.<br>Donec tincidunt gravida lacus eget lacinia.
                  <div class="pane-fade position-absolute"></div>
                  <div class="pane-tools position-absolute d-flex align-items-end"><svg width="27" height="20"><use href="#keys"/></svg><svg width="22" height="24"><use href="#scan"/></svg></div>
                </div>
              </div>
            </div>
            <div class="board-foot d-flex align-items-center">
              <div class="foot-side">Account</div>
              <div class="clock hot">00:14</div>
              <div class="foot-side d-flex align-items-center justify-content-end">Save for later<button class="next-btn">Next</button></div>
            </div>
            <div class="grid-lines position-absolute"></div>
          </div>
        </div>
      </div>
    </div>

    <div class="inspector d-flex flex-column">
      <svg class="align-strip" viewBox="3 0 424 53">
        <path d="M15 14 V40 M39 14 V40 M66 15 H93 M66 40 H93" stroke="#d6d6d6" stroke-width="1.6"/>
        <rect x="24" y="17" width="6" height="20" rx="3" fill="#a3d0f8"/><rect x="70" y="25" width="20" height="6" rx="3" fill="#a3d0f8"/>
        <path d="M113 0 V52" stroke="#e4e4e4" stroke-width="1.5"/>
        <g stroke="#a8a8a8" stroke-width="2"><path d="M132 14 V40 M195 14 V40 M259 14 V40 M282 14 H309 M333 27 H358 M382 40 H409"/></g>
        <g fill="#3d9bf5">
          <rect x="138" y="17" width="20" height="6" rx="3"/><rect x="138" y="31" width="11" height="6" rx="3"/>
          <rect x="182" y="17" width="26" height="6" rx="3"/><rect x="186" y="31" width="18" height="6" rx="3"/>
          <rect x="234" y="17" width="20" height="6" rx="3"/><rect x="242" y="31" width="12" height="6" rx="3"/>
          <rect x="287" y="19" width="6" height="20" rx="3"/><rect x="300" y="19" width="6" height="11" rx="3"/>
          <rect x="336" y="15" width="7" height="25" rx="3"/><rect x="348" y="21" width="6" height="13" rx="3"/>
          <rect x="386" y="15" width="6" height="20" rx="3"/><rect x="400" y="24" width="6" height="11" rx="3"/>
        </g>
      </svg>
      <div class="sec sec-geom">
        <div class="geom-row d-flex align-items-center"><span class="cap">Position</span><input class="form-control insp-input" value="527"><div class="geom-gap"></div><input class="form-control insp-input" value="234"></div>
        <div class="geom-row d-flex align-items-center"><span class="cap">Size</span><input class="form-control insp-input" value="455">
          <div class="lock-ico"><svg width="13" height="18" viewBox="0 0 13 18"><path d="M3 8 V4 Q3 1 6.5 1 Q10 1 10 4" fill="none" stroke="#555" stroke-width="2"/><rect y="7" width="13" height="11" rx="1.5" fill="#555"/></svg></div>
          <input class="form-control insp-input" value="306"></div>
        <div class="geom-row d-flex align-items-center"><span class="cap">Transform</span><input class="form-control insp-input" value="0º"><div class="geom-gap"></div>
          <div class="flip-seg d-flex align-items-center">
            <svg width="116" height="36" viewBox="0 0 116 36"><path d="M27 26 L37 8 V26Z" fill="#c2c2c2"/><path d="M40 4 V32" stroke="#c8c8c8" stroke-width="1.2"/><path d="M43 8 L53 26 H43Z" fill="#3d9bf5"/><path d="M58 0 V36" stroke="#dcdcdc" stroke-width="1.6"/><path d="M79 4 L97 13 H79Z" fill="#c2c2c2"/><path d="M76 17 H102" stroke="#c8c8c8" stroke-width="1.2"/><path d="M79 30 L97 21 H79Z" fill="#3d9bf5"/></svg>
          </div></div>
        <div class="flip-cap">Flip</div>
      </div>
      <div class="sec sec-slide d-flex align-items-center">
        <div class="track"><div class="fill w-25"></div><div class="knob position-absolute" style="left:32%"></div></div>
        <input class="form-control insp-input short" value="8">
      </div>
      <div class="sec sec-shared d-flex align-items-center">No Shared Style<svg class="ms-auto" width="16" height="24" color="#444"><use href="#updown"/></svg></div>
      <div class="sec sec-blend">
        <div class="blend-top d-flex align-items-center">
          <div class="track"><div class="fill w-100"></div><div class="knob position-absolute" style="left:93%"></div></div>
          <input class="form-control insp-input short" value="100%">
        </div>
        <div class="blend-sel d-flex align-items-center">Normal<div class="stepper"><svg width="16" height="24" color="#fff"><use href="#updown"/></svg></div></div>
      </div>
      <div class="sec sec-head d-flex align-items-center justify-content-end">
        <svg width="18" height="22"><use href="#trash"/></svg>
        <svg width="24" height="24" viewBox="0 0 24 24"><circle cx="12" cy="12" r="6.5" fill="none" stroke="#a2a2a2" stroke-width="4"/><circle cx="12" cy="12" r="10" fill="none" stroke="#a2a2a2" stroke-width="3.5" stroke-dasharray="4 3.85"/></svg>
        <svg width="24" height="24"><use href="#plus"/></svg>
      </div>
      <div class="sec sec-fills">
        <div class="fill-row d-flex align-items-center">
          <input class="form-check-input insp-check" type="checkbox">
          <div class="swatch"><i class="grad"></i></div>
          <div class="blend-sel narrow mute d-flex align-items-center">Normal<div class="stepper plain"><svg width="16" height="24" color="#777"><use href="#updown"/></svg></div></div>
          <div class="op-box mute d-flex align-items-center">100%</div>
        </div>
        <div class="fill-row d-flex align-items-center">
          <input class="form-check-input insp-check" type="checkbox" checked>
          <div class="swatch"><i></i></div>
          <div class="blend-sel narrow d-flex align-items-center">Normal<div class="stepper"><svg width="16" height="24" color="#fff"><use href="#updown"/></svg></div></div>
          <div class="op-box d-flex align-items-center">100%<div class="op-step position-absolute d-flex align-items-center justify-content-center"><svg width="12" height="24" viewBox="0 0 12 24"><path d="M6 3 L10 9 H2Z M6 21 L10 15 H2Z" fill="#999"/></svg></div></div>
        </div>
        <div class="cap-row"><span class="cap-a">Fill</span><span class="cap-b">Blending</span><span class="cap-c">Opacity</span></div>
      </div>
      <div class="sec sec-head tall d-flex align-items-center justify-content-end">
        <svg width="18" height="22"><use href="#trash"/></svg>
        <svg width="24" height="24"><use href="#plus"/></svg>
      </div>
      <div class="sec sec-stroke">
        <div class="fill-row d-flex align-items-center">
          <input class="form-check-input insp-check" type="checkbox">
          <div class="swatch"><i></i></div>
          <div class="blend-sel narrow mute d-flex align-items-center">Inside<div class="stepper plain"><svg width="16" height="24" color="#777"><use href="#updown"/></svg></div></div>
          <div class="op-box mute d-flex align-items-center">2</div>
        </div>
        <div class="cap-row"><span class="cap-a">Color</span><span class="cap-b">Position</span><span class="cap-c">Thickness</span></div>
      </div>
      <div class="sec sec-title d-flex align-items-center">Shadows<svg class="ms-auto" width="24" height="24"><use href="#plus"/></svg></div>
      <div class="sec sec-title d-flex align-items-center">Inner Shadows<svg class="ms-auto" width="24" height="24"><use href="#plus"/></svg></div>
      <div class="sec sec-title d-flex align-items-center">Gaussian Blur<svg class="ms-3" width="14" height="22" color="#444"><use href="#updown"/></svg><input class="form-check-input insp-check ms-auto me-0" type="checkbox"></div>
      <div class="make-export d-flex align-items-center">Make Exportable<svg class="ms-auto" width="24" height="24"><use href="#plus"/></svg></div>
    </div>
  </div>
</div>
<script src="https://cdn.jsdelivr.net/npm/bootstrap@5.3.0/dist/js/bootstrap.bundle.min.js"></script>
</body>
</html>
